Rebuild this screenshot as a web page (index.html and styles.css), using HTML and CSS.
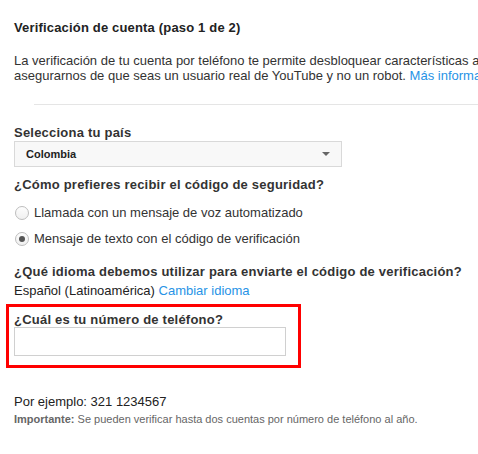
FILE: index.html
```html
<!DOCTYPE html>
<html lang="es">
<head>
<meta charset="utf-8">
<title>Verificación de cuenta</title>
<link rel="stylesheet" href="styles.css">
</head>
<body>
<div class="page">
  <h2 class="title">Verificación de cuenta (paso 1 de 2)</h2>
  <p class="intro">La verificación de tu cuenta por teléfono te permite desbloquear características adicionales en YouTube y nos ayuda a<br>asegurarnos de que seas un usuario real de YouTube y no un robot. <a class="link" href="#">Más información</a></p>
  <hr class="divider">
  <div class="label">Selecciona tu país</div>
  <div class="select"><span class="select-text">Colombia</span><span class="arrow"></span></div>
  <div class="label q-method">¿Cómo prefieres recibir el código de seguridad?</div>
  <label class="radio-row first"><span class="radio"></span>Llamada con un mensaje de voz automatizado</label>
  <label class="radio-row"><span class="radio checked"></span>Mensaje de texto con el código de verificación</label>
  <div class="label q-lang">¿Qué idioma debemos utilizar para enviarte el código de verificación?</div>
  <div class="lang">Español (Latinoamérica) <a class="link" href="#">Cambiar idioma</a></div>
  <div class="phone-box">
    <div class="label phone-label">¿Cuál es tu número de teléfono?</div>
    <input class="phone-input" type="text">
  </div>
  <div class="example">Por ejemplo: 321 1234567</div>
  <div class="note"><b>Importante:</b> Se pueden verificar hasta dos cuentas por número de teléfono al año.</div>
</div>
</body>
</html>
```
FILE: styles.css
```css
html, body {
  margin: 0;
  padding: 0;
  background: #fff;
  overflow: hidden;
}
body {
  font-family: "Liberation Sans", Arial, sans-serif;
  color: #333;
  font-size: 13px;
}
.page {
  padding: 20px 0 0 14px;
  display: flex;
  flex-direction: column;
  align-items: flex-start;
}
.title {
  margin: 0;
  font-size: 13px;
  font-weight: bold;
  line-height: 16px;
  color: #222;
  letter-spacing: 0.17px;
}
.intro {
  margin: 17px 0 0 0;
  line-height: 15px;
  white-space: nowrap;
  color: #333;
}
.link {
  color: #2793e6;
  text-decoration: none;
}
.divider {
  align-self: stretch;
  width: 700px;
  margin: 21px 0 0 20px;
  border: 0;
  border-top: 1px solid #e5e5e5;
  height: 0;
}
.label {
  font-weight: bold;
  line-height: 16px;
  color: #333;
  margin-top: 20px;
  white-space: nowrap;
  letter-spacing: 0.22px;
}
.select {
  box-sizing: border-box;
  width: 328px;
  height: 26px;
  border: 1px solid #d9d9d9;
  background: #f8f8f8;
  display: flex;
  align-items: center;
  padding: 0 11px 0 11px;
}
.select-text {
  font-size: 11px;
  font-weight: bold;
  color: #222;
}
.arrow {
  margin-left: auto;
  width: 0;
  height: 0;
  border-left: 4px solid transparent;
  border-right: 4px solid transparent;
  border-top: 4px solid #666;
}
.q-method {
  margin-top: 10px;
}
.radio-row {
  display: flex;
  align-items: center;
  line-height: 16px;
  color: #333;
  white-space: nowrap;
  margin-top: 10px;
}
.radio-row.first {
  margin-top: 12px;
}
.radio {
  box-sizing: border-box;
  width: 14px;
  height: 14px;
  border-radius: 50%;
  border: 1px solid #bdbdbd;
  background: linear-gradient(#fdfdfd, #f0f0f0);
  margin: 0 5px 0 1px;
  display: flex;
  align-items: center;
  justify-content: center;
}
.radio.checked::after {
  content: "";
  width: 6px;
  height: 6px;
  border-radius: 50%;
  background: #555;
}
.q-lang {
  margin-top: 17px;
}
.lang {
  margin-top: 3px;
  line-height: 16px;
  color: #222;
  white-space: nowrap;
}
.phone-box {
  margin: 5px 0 0 -8px;
  box-sizing: border-box;
  width: 295px;
  border: 3px solid #f00;
  padding: 5px 0 9px 5px;
  display: flex;
  flex-direction: column;
}
.phone-label {
  margin-top: 0;
  line-height: 15px;
}
.phone-input {
  box-sizing: border-box;
  width: 272px;
  height: 29px;
  margin: 0;
  border: 1px solid #d0d0d0;
  background: #fff;
  outline: none;
}
.example {
  margin-top: 26px;
  line-height: 16px;
  color: #222;
}
.note {
  margin-top: 2px;
  font-size: 11px;
  line-height: 14px;
  color: #666;
  white-space: nowrap;
}
.note b {
  color: #666;
}
```
